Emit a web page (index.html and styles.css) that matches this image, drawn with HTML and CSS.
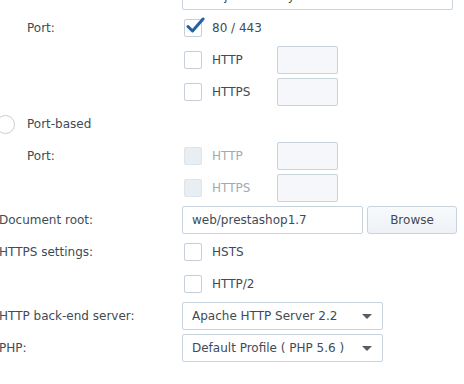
FILE: index.html
```html
<!DOCTYPE html>
<html lang="en">
<head>
    <meta charset="UTF-8">
    <title>Virtual Host Settings</title>
    <link rel="stylesheet" href="styles.css">
</head>
<body>
    <div class="form">
        <div class="row">
            <div class="label indent">Hostname:</div>
            <div class="field"><div class="text-input wide">www.jurassicvinylsl.co.uk</div></div>
        </div>

        <div class="row">
            <div class="label indent">Port:</div>
            <div class="field">
                <span class="checkbox checked">
                    <svg width="20" height="18" viewBox="0 0 20 18"><path d="M3 9.5 L7.5 14 L18 2" fill="none" stroke="#2360a5" stroke-width="3" stroke-linecap="round" stroke-linejoin="round"/></svg>
                </span>
                <span class="check-label">80 / 443</span>
            </div>
        </div>

        <div class="row">
            <div class="label"></div>
            <div class="field">
                <span class="checkbox"></span>
                <span class="check-label port-name">HTTP</span>
                <span class="port-box"></span>
            </div>
        </div>

        <div class="row">
            <div class="label"></div>
            <div class="field">
                <span class="checkbox"></span>
                <span class="check-label port-name">HTTPS</span>
                <span class="port-box"></span>
            </div>
        </div>

        <div class="row">
            <div class="radio-line">
                <span class="radio"></span>
                <span>Port-based</span>
            </div>
        </div>

        <div class="row">
            <div class="label indent">Port:</div>
            <div class="field disabled">
                <span class="checkbox"></span>
                <span class="check-label port-name">HTTP</span>
                <span class="port-box"></span>
            </div>
        </div>

        <div class="row">
            <div class="label"></div>
            <div class="field disabled">
                <span class="checkbox"></span>
                <span class="check-label port-name">HTTPS</span>
                <span class="port-box"></span>
            </div>
        </div>

        <div class="row">
            <div class="label">Document root:</div>
            <div class="field">
                <div class="text-input root">web/prestashop1.7</div>
                <button class="browse">Browse</button>
            </div>
        </div>

        <div class="row">
            <div class="label">HTTPS settings:</div>
            <div class="field">
                <span class="checkbox"></span>
                <span class="check-label">HSTS</span>
            </div>
        </div>

        <div class="row">
            <div class="label"></div>
            <div class="field">
                <span class="checkbox"></span>
                <span class="check-label">HTTP/2</span>
            </div>
        </div>

        <div class="row">
            <div class="label">HTTP back-end server:</div>
            <div class="field">
                <div class="select">
                    <span>Apache HTTP Server 2.2</span>
                    <span class="arrow"></span>
                </div>
            </div>
        </div>

        <div class="row">
            <div class="label">PHP:</div>
            <div class="field">
                <div class="select">
                    <span>Default Profile ( PHP 5.6 )</span>
                    <span class="arrow"></span>
                </div>
            </div>
        </div>
    </div>
</body>
</html>
```

FILE: styles.css
```css
body {
    margin: 0;
    background-color: #ffffff;
    font-family: "DejaVu Sans", Verdana, sans-serif;
    font-size: 12px;
    color: #414b55;
    overflow: hidden;
}
.form {
    margin-top: -18px;
    margin-left: -1px;
}
.row {
    display: flex;
    align-items: center;
    height: 28px;
    margin-bottom: 4px;
}
.label {
    width: 183px;
    flex-shrink: 0;
}
.label.indent {
    padding-left: 28px;
    box-sizing: border-box;
}
.field {
    display: flex;
    align-items: center;
}
.text-input {
    height: 28px;
    box-sizing: border-box;
    border: 1px solid #c8d3de;
    border-radius: 2px;
    padding: 0 9px;
    line-height: 26px;
    white-space: nowrap;
    overflow: hidden;
}
.text-input.wide {
    width: 271px;
}
.text-input.root {
    width: 181px;
}
.checkbox {
    position: relative;
    width: 18px;
    height: 18px;
    box-sizing: border-box;
    border: 1px solid #c6cfd8;
    border-radius: 2px;
    margin-left: 2px;
    background-color: #ffffff;
}
.checkbox svg {
    position: absolute;
    left: 0;
    top: -3px;
}
.check-label {
    margin-left: 10px;
}
.port-name {
    width: 65px;
}
.port-box {
    width: 61px;
    height: 28px;
    box-sizing: border-box;
    border: 1px solid #c8d3de;
    border-radius: 2px;
    background-color: #f5f7fa;
}
.disabled {
    color: #a0aab4;
}
.disabled .checkbox {
    background-color: #e9eef3;
    border-color: #dde4ea;
}
.radio-line {
    display: flex;
    align-items: center;
    margin-left: -3px;
}
.radio {
    width: 19px;
    height: 19px;
    box-sizing: border-box;
    border: 1px solid #c6cfd8;
    border-radius: 50%;
    margin-right: 12px;
}
.browse {
    margin-left: 4px;
    width: 90px;
    height: 28px;
    border: 1px solid #c8d3de;
    border-radius: 3px;
    background: linear-gradient(#f8fafc, #eef2f6);
    font-family: inherit;
    font-size: 12px;
    color: #414b55;
}
.select {
    width: 201px;
    height: 28px;
    box-sizing: border-box;
    border: 1px solid #c8d3de;
    border-radius: 2px;
    padding: 0 9px;
    display: flex;
    align-items: center;
    justify-content: space-between;
}
.arrow {
    width: 0;
    height: 0;
    border-left: 5px solid transparent;
    border-right: 5px solid transparent;
    border-top: 5px solid #555d66;
    margin-right: 1px;
}
```
